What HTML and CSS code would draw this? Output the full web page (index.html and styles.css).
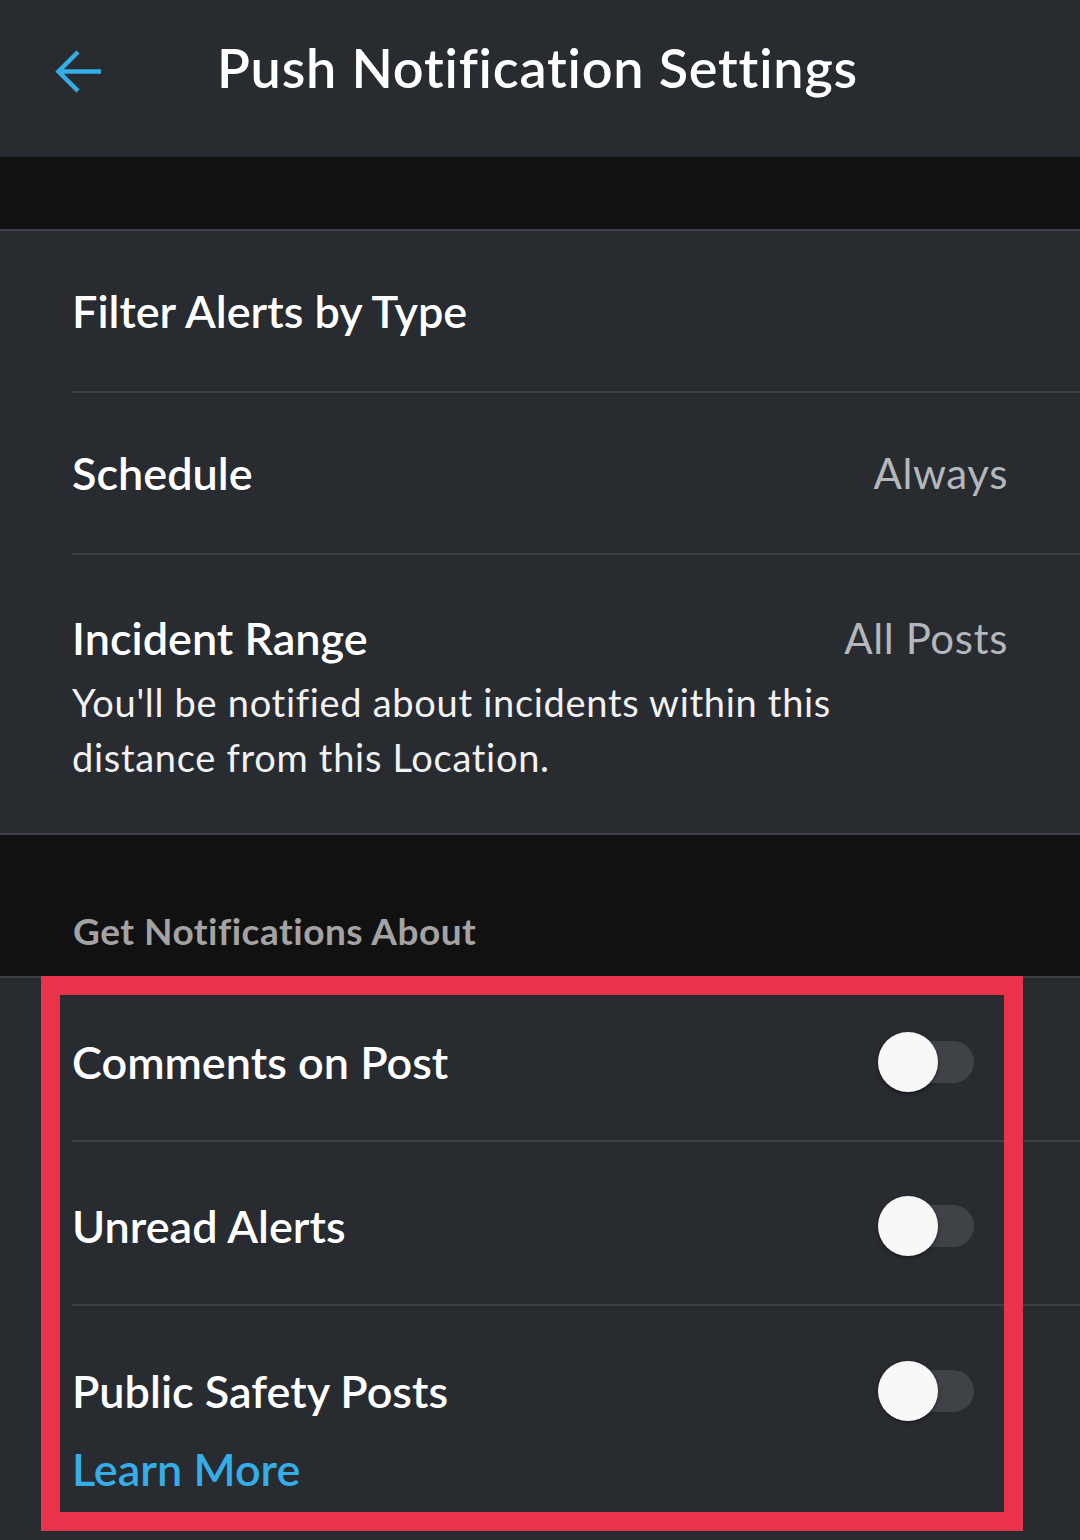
FILE: index.html
```html
<!DOCTYPE html>
<html>
<head>
<meta charset="utf-8">
<link rel="stylesheet" href="styles.css">
</head>
<body>
<div class="screen">
  <header class="topbar">
    <svg class="back" width="50" height="50" viewBox="0 0 50 50">
      <path d="M48 23.5 H6 M25 4 L5.5 23.5 L25 43" fill="none" stroke="#35aee8" stroke-width="4.5"/>
    </svg>
    <h1 class="title">Push Notification Settings</h1>
  </header>
  <div class="band band-top"></div>
  <section class="group">
    <div class="row">
      <div class="row-main"><span class="label">Filter Alerts by Type</span></div>
    </div>
    <div class="row">
      <div class="row-main"><span class="label">Schedule</span><span class="value">Always</span></div>
    </div>
    <div class="row row-tall">
      <div class="row-main"><span class="label">Incident Range</span><span class="value">All Posts</span></div>
      <p class="desc">You'll be notified about incidents within this distance from this Location.</p>
    </div>
  </section>
  <div class="band band-mid"><span class="band-title">Get Notifications About</span></div>
  <section class="group group-last">
    <div class="row">
      <div class="row-main"><span class="label">Comments on Post</span><span class="toggle"><span class="knob"></span></span></div>
    </div>
    <div class="row">
      <div class="row-main"><span class="label">Unread Alerts</span><span class="toggle"><span class="knob"></span></span></div>
    </div>
    <div class="row row-link">
      <div class="row-main"><span class="label">Public Safety Posts</span><span class="toggle"><span class="knob"></span></span></div>
      <span class="link">Learn More</span>
    </div>
    <div class="highlight"></div>
  </section>
</div>
</body>
</html>
```
FILE: styles.css
```css
* { box-sizing: border-box; margin: 0; padding: 0; }
html, body { width: 1080px; height: 1540px; overflow: hidden; background: #282b30; }
body { font-family: "Lato", "Noto Sans", sans-serif; color: #fff; }
.screen { width: 1080px; height: 1540px; display: flex; flex-direction: column; }
.screen > * { flex: none; }
.topbar { height: 157px; background: #282b30; display: flex; align-items: center; padding-left: 53px; padding-bottom: 22px; }
.back { flex: none; margin-top: 10px; }
.title { font-size: 54px; font-weight: 600; margin-left: 114px; letter-spacing: 0.8px; }
.band { background: #111111; }
.band-top { height: 72px; }
.band-mid { height: 141px; display: flex; align-items: flex-end; padding-left: 73px; padding-bottom: 23px; }
.band-title { font-size: 37px; font-weight: 700; color: #a3a3a3; letter-spacing: 0.5px; }
.group { background: #282b30; border-top: 2px solid #3d4045; border-bottom: 2px solid #3d4045; padding-left: 72px; }
.screen > .group-last { position: relative; flex: 1; border-bottom: none; }
.row { height: 162px; display: flex; flex-direction: column; justify-content: center; border-bottom: 2px solid #3d4045; padding-right: 72px; }
.group-last .row { height: 164px; padding-top: 6px; }
.row-tall { border-bottom: none; }
.row-main { display: flex; align-items: center; justify-content: space-between; }
.label { font-size: 45px; font-weight: 600; letter-spacing: 0; }
.value { font-size: 42px; color: #b4b7bb; letter-spacing: 0.6px; }
.row-tall { height: 278px; justify-content: flex-start; padding-top: 56px; }
.desc { font-size: 38px; line-height: 55px; color: #f2f2f2; margin-top: 10px; max-width: 800px; letter-spacing: 0.7px; }
.toggle { position: relative; width: 96px; height: 42px; margin-right: 34px; border-radius: 21px; background: #3f4246; }
.knob { position: absolute; left: 0; top: -9px; width: 60px; height: 60px; border-radius: 50%; background: #f8f8f8; box-shadow: 0 2px 4px rgba(0,0,0,0.35); }
.group-last .row-link { justify-content: flex-start; padding-top: 58px; height: auto; border-bottom: none; }
.link { font-size: 45px; font-weight: 600; color: #35aee8; margin-top: 24px; letter-spacing: 0; }
.highlight { position: absolute; left: 41px; top: -2px; width: 982px; height: 555px; border: 19px solid #e8334a; pointer-events: none; }
```
